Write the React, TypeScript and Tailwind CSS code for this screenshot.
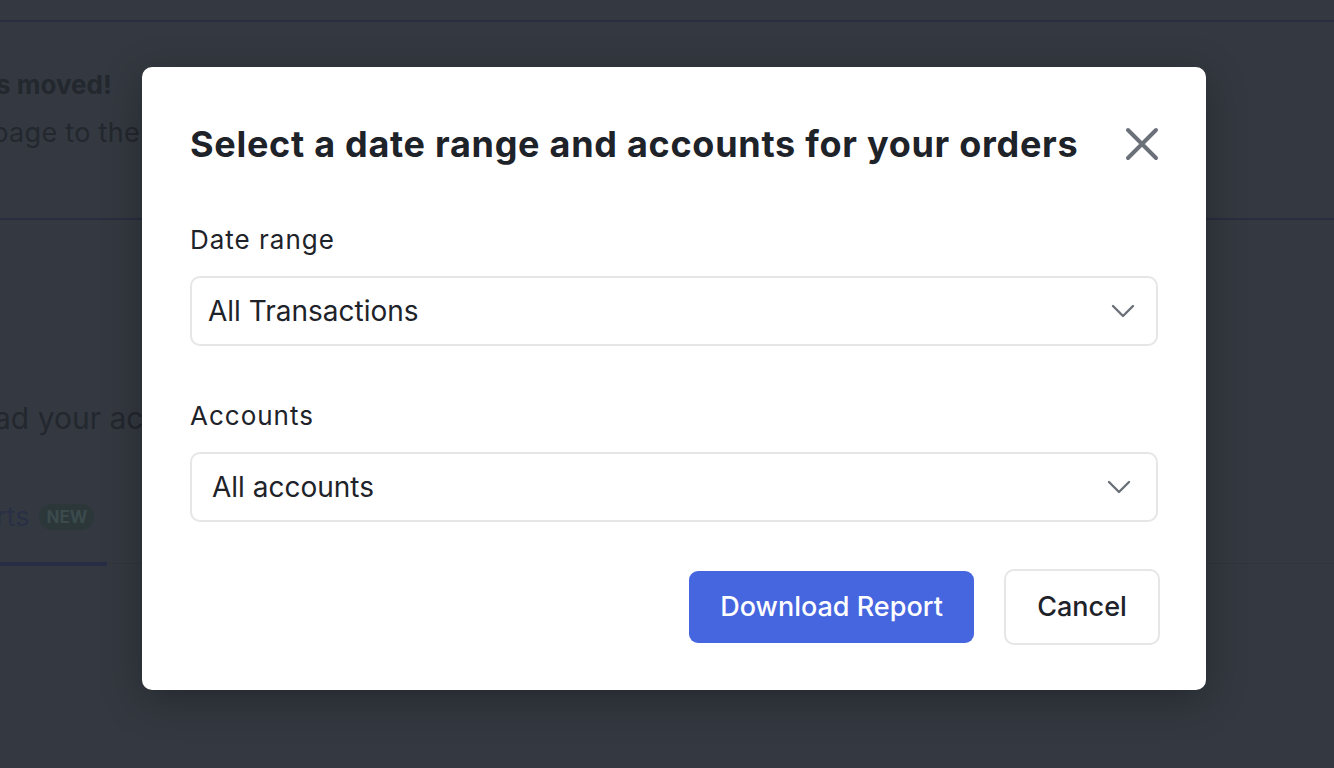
function Chevron() {
  return (
    <svg width="24" height="14" viewBox="0 0 24 14" fill="none" className="text-[#6b7079]">
      <path d="M2 2 L12 12 L22 2" stroke="currentColor" strokeWidth="2.4" strokeLinecap="round" strokeLinejoin="round" />
    </svg>
  );
}

function SelectBox({ value, padLeft, padRight }: { value: string; padLeft: string; padRight: string }) {
  return (
    <div
      className={`flex h-[70px] items-center justify-between rounded-[10px] border-2 border-[#e6e6e6] ${padLeft} ${padRight}`}
    >
      <span className="text-[28px] text-[#1e2229]">{value}</span>
      <Chevron />
    </div>
  );
}

export default function App() {
  return (
    <div
      className="relative h-[768px] w-[1334px] overflow-hidden bg-[#343941]"
      style={{ fontFamily: "Inter, 'Noto Sans', sans-serif" }}
    >
      {/* dimmed page behind the dialog */}
      <div className="h-[20px]" />
      <div className="h-[2px] bg-[#282e3e]" />
      <div className="flex h-[196px] flex-col pt-[46px] text-[#23272e]">
        <div className="-ml-[4px] text-[26px] leading-[34px] font-bold">s moved!</div>
        <div className="-ml-[8px] mt-[14px] text-[27px] leading-[34px] tracking-[0.3px]">page to the</div>
      </div>
      <div className="h-[2px] bg-[#282e3e]" />
      <div className="flex flex-col pt-[176px]">
        <div className="-ml-[6px] text-[30px] text-[#23272e]">ad your ac</div>
        <div className="mt-[56px] flex items-center gap-[10px]">
          <span className="-ml-[4px] text-[27px] text-[#292f45]">rts</span>
          <span className="flex h-[26px] w-[55px] items-center justify-center rounded-full bg-[#2b3739] text-[17px] font-bold text-[#3b4a4d]">
            NEW
          </span>
        </div>
        <div className="mt-[24px] flex items-center">
          <div className="h-[4px] w-[107px] bg-[#262d45]" />
          <div className="h-[1px] flex-1 bg-[#30353d]" />
        </div>
      </div>

      {/* dialog */}
      <div className="absolute left-[142px] top-[67px] w-[1064px] rounded-[10px] bg-white px-[48px] pb-[45px] pt-[55px] shadow-[0_10px_40px_rgba(0,0,0,0.3)]">
        <div className="flex h-[44px] items-center justify-between">
          <h2 className="text-[36px] leading-[44px] font-bold tracking-[0.72px] text-[#1e2229]">
            Select a date range and accounts for your orders
          </h2>
          <svg width="34" height="34" viewBox="0 0 34 34" fill="none" className="-mr-[1px] text-[#6b7079]">
            <path d="M3 3 L31 31 M31 3 L3 31" stroke="currentColor" strokeWidth="4" strokeLinecap="round" />
          </svg>
        </div>
        <div className="mt-[58px] text-[26px] leading-[32px] tracking-[1px] text-[#1e2229]">Date range</div>
        <div className="mt-[20px]">
          <SelectBox value="All Transactions" padLeft="pl-[16px]" padRight="pr-[21px]" />
        </div>
        <div className="mt-[54px] text-[26px] leading-[32px] tracking-[1px] text-[#1e2229]">Accounts</div>
        <div className="mt-[20px]">
          <SelectBox value="All accounts" padLeft="pl-[20px]" padRight="pr-[25px]" />
        </div>
        <div className="mt-[47px] flex items-center justify-end gap-[30px]">
          <button
            type="button"
            className="h-[72px] w-[285px] rounded-[9px] bg-[#4666e0] text-[27px] font-medium text-white"
          >
            Download Report
          </button>
          <button
            type="button"
            className="-mr-[2px] h-[76px] w-[156px] rounded-[10px] border-2 border-[#e6e6e6] bg-white text-[27px] font-medium text-[#1e2229]"
          >
            Cancel
          </button>
        </div>
      </div>
    </div>
  );
}
